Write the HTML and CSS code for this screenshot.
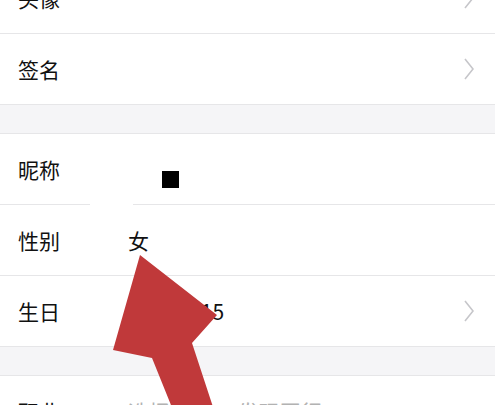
FILE: index.html
```html
<!DOCTYPE html>
<html lang="zh-CN">
<head>
  <meta charset="UTF-8">
  <meta name="viewport" content="width=device-width, initial-scale=1.0">
  <title>个人信息</title>
  <link rel="stylesheet" href="styles.css">
</head>
<body>
  <div class="page">
    <div class="group group-first">
      <div class="row">
        <span class="label">头像</span>
        <span class="value"></span>
        <svg class="chevron" viewBox="0 0 10 22"><polyline points="1,1 9,11 1,21" /></svg>
      </div>
      <div class="row">
        <span class="label">签名</span>
        <span class="value"></span>
        <svg class="chevron" viewBox="0 0 10 22"><polyline points="1,1 9,11 1,21" /></svg>
      </div>
    </div>

    <div class="group">
      <div class="row">
        <span class="label">昵称</span>
        <span class="value"><span class="nick-mark"></span></span>
      </div>
      <div class="row">
        <span class="label">性别</span>
        <span class="value">女</span>
      </div>
      <div class="row">
        <span class="label">生日</span>
        <span class="value">2000-1-15</span>
        <svg class="chevron" viewBox="0 0 10 22"><polyline points="1,1 9,11 1,21" /></svg>
      </div>
    </div>

    <div class="group">
      <div class="row">
        <span class="label">职业</span>
        <span class="value muted">选择职业， 发现同行</span>
      </div>
    </div>
  </div>

  <!-- red arrow drawn over the screenshot -->
  <svg class="overlay" width="495" height="405" viewBox="0 0 495 405">
    <rect x="90" y="203" width="43" height="3" fill="#fff" />
    <polygon fill="#c0393a" points="140,255 217,315 192,343 214,410 173,410 152,358 113,350" />
  </svg>
</body>
</html>
```

FILE: styles.css
```css
* {
  margin: 0;
  padding: 0;
  box-sizing: border-box;
}

body {
  font-family: "Noto Sans CJK SC", "Liberation Sans", sans-serif;
  background-color: #f5f5f7;
  color: #111;
  overflow: hidden;
  height: 405px;
}

.page {
  display: flex;
  flex-direction: column;
  gap: 28px;
}

.group {
  background: #fff;
  border-top: 1px solid #e6e6e8;
}

.group-first {
  margin-top: -38px;
}

.row {
  display: flex;
  align-items: center;
  height: 71px;
  padding: 0 21px 0 18px;
  border-bottom: 1px solid #e6e6e8;
  font-size: 21px;
}

.label {
  width: 110px;
  flex-shrink: 0;
}

.value {
  flex: 1;
}

.muted {
  color: #b2b2b2;
}

.nick-mark {
  display: inline-block;
  width: 17px;
  height: 17px;
  background: #000;
  margin-left: 34px;
  margin-top: 26px;
}

.chevron {
  width: 10px;
  height: 22px;
  fill: none;
  stroke: #c6c6ca;
  stroke-width: 1.6;
}

.overlay {
  position: absolute;
  top: 0;
  left: 0;
  pointer-events: none;
}
```
